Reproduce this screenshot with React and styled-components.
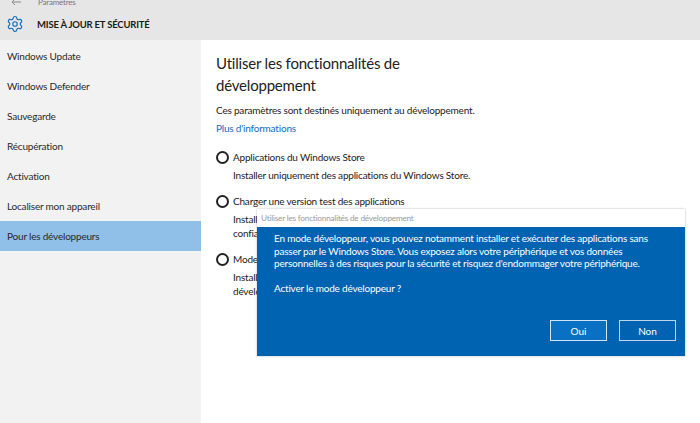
import React from 'react';
import styled, { createGlobalStyle } from 'styled-components';
import { Settings } from 'lucide-react';

const GlobalStyle = createGlobalStyle`
  html, body {
    margin: 0;
    padding: 0;
    background: #fff;
  }
  body {
    font-family: Lato, "Open Sans", "Liberation Sans", sans-serif;
    letter-spacing: -0.2px;
    color: #222;
  }
`;

const menu = [
  'Windows Update',
  'Windows Defender',
  'Sauvegarde',
  'Récupération',
  'Activation',
  'Localiser mon appareil',
  'Pour les développeurs',
];

const options = [
  { label: 'Applications du Windows Store', desc: ['Installer uniquement des applications du Windows Store.'] },
  { label: 'Charger une version test des applications', desc: ['Installer', 'confiance'] },
  { label: 'Mode développeur', desc: ['Installer', 'développeur'] },
];

function BackArrow() {
  return (
    <svg width="10" height="8" viewBox="0 0 10 8" fill="none" stroke="#8a8a8a" strokeWidth="1">
      <path d="M10 4H1M4 1L1 4l3 3" />
    </svg>
  );
}

export default function App() {
  return (
    <Page>
      <GlobalStyle />
      <Header>
        <TopRow>
          <BackArrow />
          <AppName>Paramètres</AppName>
        </TopRow>
        <TitleRow>
          <Settings size={18} color="#0f6cbd" strokeWidth={1.5} />
          <SectionName>MISE À JOUR ET SÉCURITÉ</SectionName>
        </TitleRow>
      </Header>
      <Body>
        <Sidebar>
          {menu.map((item) => (
            <MenuItem key={item} $active={item === 'Pour les développeurs'}>
              {item}
            </MenuItem>
          ))}
        </Sidebar>
        <Main>
          <Title>
            Utiliser les fonctionnalités de
            <br />
            développement
          </Title>
          <Intro>Ces paramètres sont destinés uniquement au développement.</Intro>
          <MoreLink>Plus d'informations</MoreLink>
          <OptionList>
            {options.map((option) => (
              <Option key={option.label}>
                <OptionHead>
                  <Radio />
                  <span>{option.label}</span>
                </OptionHead>
                <OptionDesc>
                  {option.desc.map((line) => (
                    <div key={line}>{line}</div>
                  ))}
                </OptionDesc>
              </Option>
            ))}
          </OptionList>
        </Main>
      </Body>
      <Dialog>
        <DialogTitle>Utiliser les fonctionnalités de développement</DialogTitle>
        <DialogBody>
          <DialogText>
            En mode développeur, vous pouvez notamment installer et exécuter des applications sans
            <br />
            passer par le Windows Store. Vous exposez alors votre périphérique et vos données
            <br />
            personnelles à des risques pour la sécurité et risquez d'endommager votre périphérique.
          </DialogText>
          <DialogText>Activer le mode développeur ?</DialogText>
          <Buttons>
            <DialogButton $primary>Oui</DialogButton>
            <DialogButton>Non</DialogButton>
          </Buttons>
        </DialogBody>
      </Dialog>
    </Page>
  );
}

const Page = styled.div`
  position: relative;
  width: 700px;
  height: 423px;
  overflow: hidden;
  display: flex;
  flex-direction: column;
`;

const Header = styled.header`
  height: 40px;
  background: #e6e6e6;
  flex-shrink: 0;
  overflow: hidden;
`;

const TopRow = styled.div`
  height: 10px;
  margin-top: -3px;
  padding-left: 11px;
  display: flex;
  align-items: center;
  gap: 17px;
`;

const AppName = styled.span`
  font-size: 8px;
  color: #777;
`;

const TitleRow = styled.div`
  height: 34px;
  padding-left: 6px;
  display: flex;
  align-items: center;
  gap: 13px;
`;

const SectionName = styled.span`
  font-size: 9.5px;
  font-weight: 700;
  color: #1a1a1a;
`;

const Body = styled.div`
  flex: 1;
  display: flex;
`;

const Sidebar = styled.nav`
  width: 201px;
  padding-top: 1px;
  background: #f2f2f2;
  flex-shrink: 0;
`;

const MenuItem = styled.div`
  height: 30px;
  padding: 0 0 1px 7px;
  box-sizing: border-box;
  display: flex;
  align-items: center;
  font-size: 10px;
  color: #2a2a2a;
  background: ${(p) => (p.$active ? '#90bfe8' : 'transparent')};
`;

const Main = styled.main`
  flex: 1;
  padding: 12px 0 0 15px;
  background: #fff;
`;

const Title = styled.h1`
  margin: 0;
  font-size: 15px;
  font-weight: 400;
  line-height: 22px;
  color: #222;
`;

const Intro = styled.p`
  margin: 6px 0 0;
  font-size: 10px;
  line-height: 16px;
`;

const MoreLink = styled.a`
  display: block;
  margin-top: 2px;
  font-size: 10px;
  line-height: 16px;
  color: #0f6cbd;
`;

const OptionList = styled.div`
  margin-top: 14px;
  display: flex;
  flex-direction: column;
  gap: 12px;
`;

const Option = styled.div``;

const OptionHead = styled.div`
  display: flex;
  align-items: center;
  gap: 4px;
  font-size: 10px;
  line-height: 14px;
`;

const Radio = styled.span`
  width: 9px;
  height: 9px;
  border: 2px solid #222;
  border-radius: 50%;
  flex-shrink: 0;
`;

const OptionDesc = styled.div`
  margin: 4px 0 0 17px;
  font-size: 10px;
  line-height: 14px;
`;

const Dialog = styled.div`
  position: absolute;
  left: 257px;
  top: 209px;
  width: 428px;
  height: 147px;
  display: flex;
  flex-direction: column;
  box-shadow: 0 0 2px rgba(0, 0, 0, 0.3);
`;

const DialogTitle = styled.div`
  height: 18px;
  padding-left: 4px;
  display: flex;
  align-items: center;
  background: #fff;
  font-size: 8.2px;
  color: #999;
`;

const DialogBody = styled.div`
  flex: 1;
  position: relative;
  padding: 5px 16px 0 17px;
  background: #0063b1;
`;

const DialogText = styled.p`
  margin: 0 0 12px;
  font-size: 10px;
  line-height: 12.5px;
  color: #fff;
  white-space: nowrap;
`;

const Buttons = styled.div`
  position: absolute;
  right: 9px;
  bottom: 15px;
  display: flex;
  gap: 12px;
`;

const DialogButton = styled.button`
  width: 57px;
  height: 21px;
  padding: 0;
  font-family: inherit;
  font-size: 10px;
  color: #fff;
  background: ${(p) => (p.$primary ? '#0a70c4' : '#0063b1')};
  border: 1.5px solid ${(p) => (p.$primary ? '#cfe4f5' : '#bcd6ec')};
`;
